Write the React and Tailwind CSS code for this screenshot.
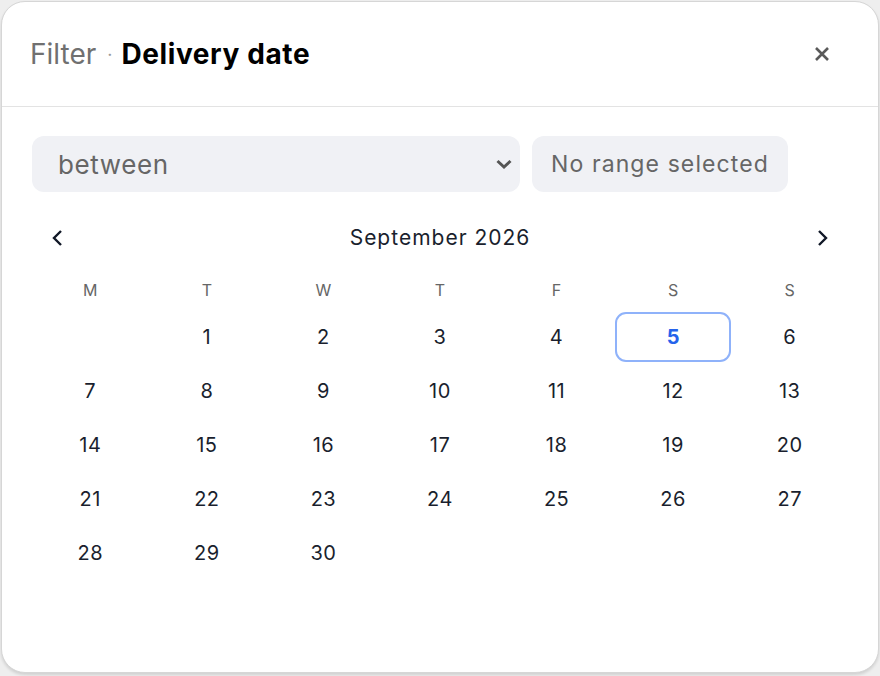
import React from "react";

const days = [
  [null, 1, 2, 3, 4, 5, 6],
  [7, 8, 9, 10, 11, 12, 13],
  [14, 15, 16, 17, 18, 19, 20],
  [21, 22, 23, 24, 25, 26, 27],
  [28, 29, 30, null, null, null, null],
];
const wd = ["M", "T", "W", "T", "F", "S", "S"];

export default function App() {
  return (
    <div className="w-[880px] h-[676px] bg-[#eeeeee] p-px" style={{ fontFamily: "Inter, sans-serif" }}>
      <div className="h-[672px] bg-white border border-[#d6d6d6] rounded-[24px] shadow-[0_2px_3px_rgba(0,0,0,0.12)] flex flex-col overflow-hidden">
        <div className="h-[105px] flex items-center justify-between pl-[28px] pr-[48px] border-b border-[#e3e3e3] shrink-0">
          <div className="flex items-center text-[28px]">
            <span className="text-[#707070]">Filter</span>
            <span className="text-[#9a9a9a] ml-[11px] mr-[9px] text-[18px]">·</span>
            <span className="font-bold text-black tracking-[0.6px]">Delivery date</span>
          </div>
          <svg width="16" height="16" viewBox="0 0 16 16" className="-mt-[1px]">
            <path d="M2 2 L14 14 M14 2 L2 14" stroke="#5a5a5a" strokeWidth="2.6" strokeLinecap="butt" />
          </svg>
        </div>
        <div className="px-[30px] pt-[29px]">
          <div className="flex gap-[12px]">
            <div className="w-[488px] h-[56px] bg-[#f0f1f5] rounded-[12px] flex items-center justify-between pl-[26px] pr-[7px]">
              <span className="text-[26px] text-[#666666] tracking-[0.6px]">between</span>
              <svg width="18" height="12" viewBox="0 0 18 12">
                <path d="M2.5 3 L9 9 L15.5 3" fill="none" stroke="#555555" strokeWidth="3" />
              </svg>
            </div>
            <div className="w-[256px] h-[56px] bg-[#f0f1f5] rounded-[12px] flex items-center pl-[19px]">
              <span className="text-[23px] text-[#666666] tracking-[1.1px]">No range selected</span>
            </div>
          </div>
          <div className="flex items-center justify-between h-[46px] mt-[23px] px-[19px]">
            <svg width="12" height="18" viewBox="0 0 12 18">
              <path d="M10 2 L3 9 L10 16" fill="none" stroke="#111827" strokeWidth="2.4" />
            </svg>
            <span className="text-[21px] text-[#1a1f2e] tracking-[1px]">September 2026</span>
            <svg width="12" height="18" viewBox="0 0 12 18">
              <path d="M2 2 L9 9 L2 16" fill="none" stroke="#111827" strokeWidth="2.4" />
            </svg>
          </div>
          <div className="grid grid-cols-7 w-[816px] mt-[17px]">
            {wd.map((d, i) => (
              <div key={i} className="h-[24px] flex items-center justify-center text-[16px] text-[#666666]">
                {d}
              </div>
            ))}
          </div>
          <div className="grid grid-cols-7 w-[816px] mt-[10px] gap-y-[4px]">
            {days.flat().map((d, i) => (
              <div key={i} className="h-[50px] flex items-center justify-center">
                {d === 5 ? (
                  <div className="w-[118px] h-[50px] rounded-[11px] border-2 border-[#8fb2fa] flex items-center justify-center text-[20px] font-bold text-[#2563eb]">
                    5
                  </div>
                ) : (
                  <span className="text-[20px] text-[#1a1f2e] tracking-[0.5px]">{d}</span>
                )}
              </div>
            ))}
          </div>
        </div>
      </div>
    </div>
  );
}
